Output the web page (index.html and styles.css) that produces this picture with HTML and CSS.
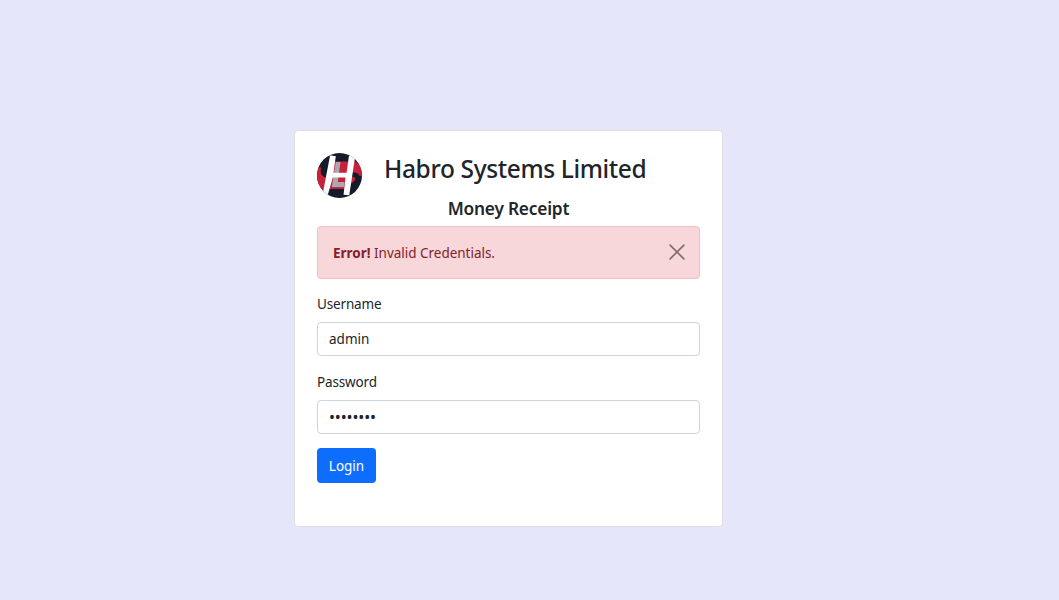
FILE: index.html
```html
<!DOCTYPE html>
<html lang="en">
<head>
<meta charset="utf-8">
<title>Habro Systems Limited</title>
<link rel="stylesheet" href="styles.css">
</head>
<body>
<main class="card">
  <header class="brand">
    <svg class="logo" viewBox="22 21 134 134" aria-hidden="true">
      <defs><clipPath id="disc"><circle cx="89" cy="88" r="67"/></clipPath></defs>
      <g clip-path="url(#disc)">
        <path fill="#141c29" d="M22 21h134v134H22z"/>
        <path fill="#c9203b" d="M66 46H122L110 128H50z"/>
        <path fill="#c9203b" d="M22 66L35 64C30 78 34 92 52 94L42 136L22 110z"/>
        <path fill="#c9203b" d="M134 44Q150 54 158 72V88L149 90Q144 77 127 80z"/>
        <path fill="#c9203b" d="M124 92Q134 90 137 96Q134 109 116 115z"/>
        <path fill="#aaa9ad" d="M78 48H92L84 107H104L102 122H66z"/>
        <path fill="#fff" d="M61 28L78 31L71 80H110L117 30L136 29L118 147L101 145L107 94H69L57 136L54 146L39 143z"/>
      </g>
    </svg>
    <div class="titles">
      <h1 class="company">Habro Systems Limited</h1>
    </div>
  </header>
  <h2 class="product">Money Receipt</h2>
  <div class="alert" role="alert">
    <span class="message"><strong>Error!</strong> Invalid Credentials.</span>
    <button class="close" type="button" aria-label="Close">
      <svg class="cross" viewBox="0 0 14 14"><path d="M1 1L13 13M13 1L1 13"/></svg>
    </button>
  </div>
  <form class="form">
    <label class="label" for="username">Username</label>
    <input class="input" id="username" type="text" value="admin">
    <label class="label" for="password">Password</label>
    <input class="input password" id="password" type="text" value="••••••••">
    <button class="login" type="button">Login</button>
  </form>
</main>
</body>
</html>
```

FILE: styles.css
```css
* { box-sizing: border-box; }
body {
  margin: 0;
  height: 600px;
  padding: 130px 0 0 294px;
  background: #e6e6fa;
  color: #212529;
  font: 13.5px/21px "Segoe UI", "Noto Sans", sans-serif;
}
.card {
  width: 429px;
  height: 397px;
  padding: 22px;
  background: #fff;
  border: 1px solid #dfdfdf;
  border-radius: 4px;
}
.brand { display: flex; height: 46px; }
.logo { width: 45px; height: 45px; }
.titles { padding-left: 22px; }
.company {
  margin: 0;
  font-size: 24.5px;
  line-height: 31px;
  font-weight: 500;
  white-space: nowrap;
  letter-spacing: -.37px;
}
.product {
  margin: 0;
  height: 27px;
  font-size: 17.3px;
  line-height: 20px;
  font-weight: 600;
  letter-spacing: -.2px;
  text-align: center;
}
.alert {
  display: flex;
  align-items: center;
  justify-content: space-between;
  height: 53px;
  padding: 0 14px 0 15px;
  background: #f8d7da;
  border: 1px solid #f1bfc4;
  border-radius: 4px;
  color: #842029;
}
.message { padding-top: 2px; letter-spacing: -.02px; }
.close {
  display: flex;
  padding: 0 0 2px;
  border: 0;
  background: none;
}
.cross {
  width: 16px;
  height: 16px;
  fill: none;
  stroke: #7c6c6d;
  stroke-width: 1.4;
  stroke-linecap: round;
}
.form { padding-top: 15px; }
.label {
  display: block;
  margin-bottom: 7px;
  letter-spacing: -.15px;
}
.input {
  display: block;
  width: 100%;
  height: 34px;
  margin-bottom: 16px;
  padding: 0 11px 1px;
  border: 1px solid #ced4da;
  border-radius: 4px;
  background: #fff;
  color: #212529;
  font: inherit;
}
.password {
  margin-bottom: 14px;
  padding-bottom: 0;
  font-size: 16px;
  letter-spacing: -.15px;
}
.login {
  display: block;
  width: 59px;
  height: 35px;
  padding: 1px 0 0;
  border: 0;
  border-radius: 4px;
  background: #0d6efd;
  color: #fff;
  font: inherit;
}
```
